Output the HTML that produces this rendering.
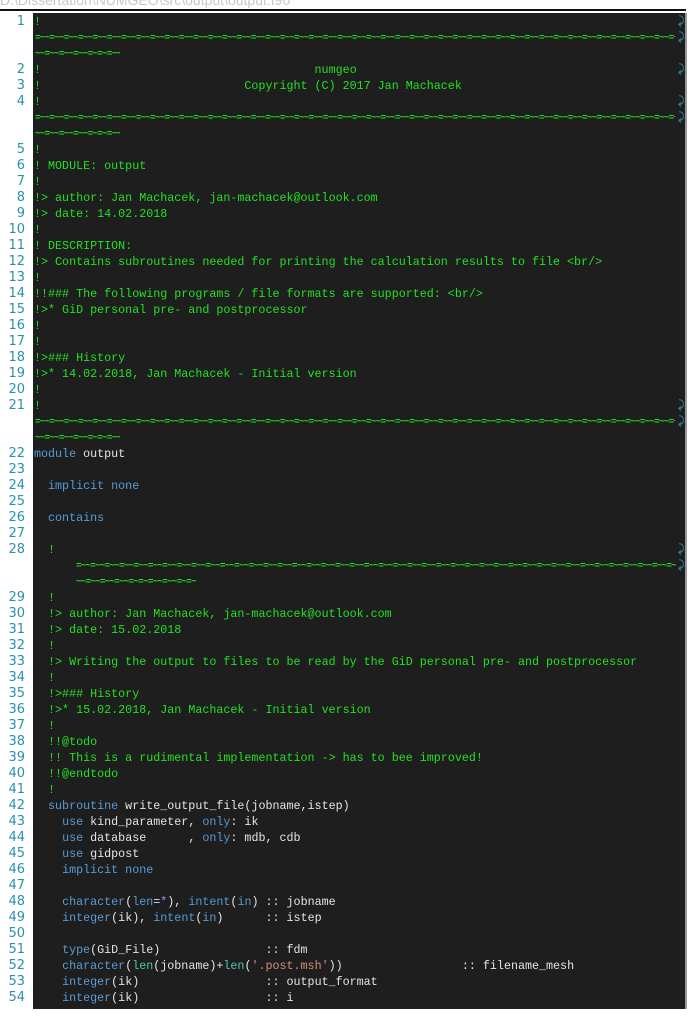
<!DOCTYPE html>
<html><head><meta charset="utf-8"><style>
body{margin:0;width:697px;height:1024px;background:#fff;position:relative;overflow:hidden;font-family:"Liberation Mono",monospace;}
.path{position:absolute;left:0;top:-8px;color:#c8c8c8;font-size:14px;font-family:"Liberation Sans",sans-serif;}
.hr{position:absolute;left:0;top:9px;width:686px;height:2px;background:#111;}
.panel{position:absolute;left:33px;top:13px;width:652px;height:996px;background:#1e1e1e;border-right:2px solid #999;}
.r{position:absolute;height:16px;line-height:16px;font-size:11.7px;white-space:pre;color:#e4e4e4;}
.n{position:absolute;left:0;width:25px;text-align:right;color:#2b91af;font-size:13px;height:16px;line-height:16px;font-family:"DejaVu Sans",sans-serif;}
.c{color:#22e022}.k{color:#569cd6}.s{color:#ce9178}.f{color:#4ec9b0}.p{color:#b48cf0}
.t{position:absolute;height:16px;line-height:16px;font-size:9px;font-weight:bold;color:#22e022;white-space:nowrap;overflow:hidden;letter-spacing:-0.6px}
.w{position:absolute;left:678px;color:#2b7a9a;font-size:11px;font-weight:bold;height:16px;line-height:16px}
</style></head><body>
<div class="path">D:\Dissertation\NUMGEO\src\output\output.f90</div>
<div class="hr"></div>
<div class="panel"></div>
<div id="c"></div>
<script>
const tl="=~~".repeat(60);
const rows=[
[1,'<span class="c">!</span>',0,1],['T',35,675],['T2',35,120],
[2,'<span class="c">!                                       numgeo</span>',0,1],
[3,'<span class="c">!                             Copyright (C) 2017 Jan Machacek</span>'],
[4,'<span class="c">!</span>',0,1],['T',35,675],['T2',35,120],
[5,'<span class="c">!</span>'],
[6,'<span class="c">! MODULE: output</span>'],
[7,'<span class="c">!</span>'],
[8,'<span class="c">!&gt; author: Jan Machacek, jan-machacek@outlook.com</span>'],
[9,'<span class="c">!&gt; date: 14.02.2018</span>'],
[10,'<span class="c">!</span>'],
[11,'<span class="c">! DESCRIPTION:</span>'],
[12,'<span class="c">!&gt; Contains subroutines needed for printing the calculation results to file &lt;br/&gt;</span>'],
[13,'<span class="c">!</span>'],
[14,'<span class="c">!!### The following programs / file formats are supported: &lt;br/&gt;</span>'],
[15,'<span class="c">!&gt;* GiD personal pre- and postprocessor</span>'],
[16,'<span class="c">!</span>'],
[17,'<span class="c">!</span>'],
[18,'<span class="c">!&gt;### History</span>'],
[19,'<span class="c">!&gt;* 14.02.2018, Jan Machacek - Initial version</span>'],
[20,'<span class="c">!</span>'],
[21,'<span class="c">!</span>',0,1],['T',35,675],['T2',35,120],
[22,'<span class="k">module</span> output'],
[23,''],
[24,'  <span class="k">implicit none</span>'],
[25,''],
[26,'  <span class="k">contains</span>'],
[27,''],
[28,'  <span class="c">!</span>',0,1],['T',76,676],['T2',76,205],
[29,'  <span class="c">!</span>'],
[30,'  <span class="c">!&gt; author: Jan Machacek, jan-machacek@outlook.com</span>'],
[31,'  <span class="c">!&gt; date: 15.02.2018</span>'],
[32,'  <span class="c">!</span>'],
[33,'  <span class="c">!&gt; Writing the output to files to be read by the GiD personal pre- and postprocessor</span>'],
[34,'  <span class="c">!</span>'],
[35,'  <span class="c">!&gt;### History</span>'],
[36,'  <span class="c">!&gt;* 15.02.2018, Jan Machacek - Initial version</span>'],
[37,'  <span class="c">!</span>'],
[38,'  <span class="c">!!@todo</span>'],
[39,'  <span class="c">!! This is a rudimental implementation -&gt; has to bee improved!</span>'],
[40,'  <span class="c">!!@endtodo</span>'],
[41,'  <span class="c">!</span>'],
[42,'  <span class="k">subroutine</span> write_output_file(jobname,istep)'],
[43,'    <span class="k">use</span> kind_parameter, <span class="k">only</span>: ik'],
[44,'    <span class="k">use</span> database      , <span class="k">only</span>: mdb, cdb'],
[45,'    <span class="k">use</span> gidpost'],
[46,'    <span class="k">implicit none</span>'],
[47,''],
[48,'    <span class="k">character</span>(<span class="k">len</span>=<span class="p">*</span>), <span class="k">intent</span>(<span class="k">in</span>) :: jobname'],
[49,'    <span class="k">integer</span>(ik), <span class="k">intent</span>(<span class="k">in</span>)      :: istep'],
[50,''],
[51,'    <span class="k">type</span>(GiD_File)               :: fdm'],
[52,'    <span class="k">character</span>(<span class="f">len</span>(jobname)+<span class="f">len</span>(<span class="s">\'.post.msh\'</span>))                 :: filename_mesh'],
[53,'    <span class="k">integer</span>(ik)                  :: output_format'],
[54,'    <span class="k">integer</span>(ik)                  :: i']
];
let h='';rows.forEach((r,i)=>{const y=14+16*i;
if(r[0]==='T'||r[0]==='T2'){h+=`<div class="t" style="top:${y}px;left:${r[1]}px;width:${r[2]-r[1]}px">${r[0]==='T'?tl:'~~=~~=~~=~~=~=~=~~=~~=~=~'}</div>`;if(r[0]==='T')h+=`<div class="w" style="top:${y}px">&#x2938;</div>`;return;}
h+=`<div class="n" style="top:${y}px">${r[0]}</div><div class="r" style="top:${y}px;left:34px">${r[1]}</div>`;
if(r[3])h+=`<div class="w" style="top:${y}px">&#x2938;</div>`;});
document.getElementById('c').innerHTML=h;
</script>
</body></html>
